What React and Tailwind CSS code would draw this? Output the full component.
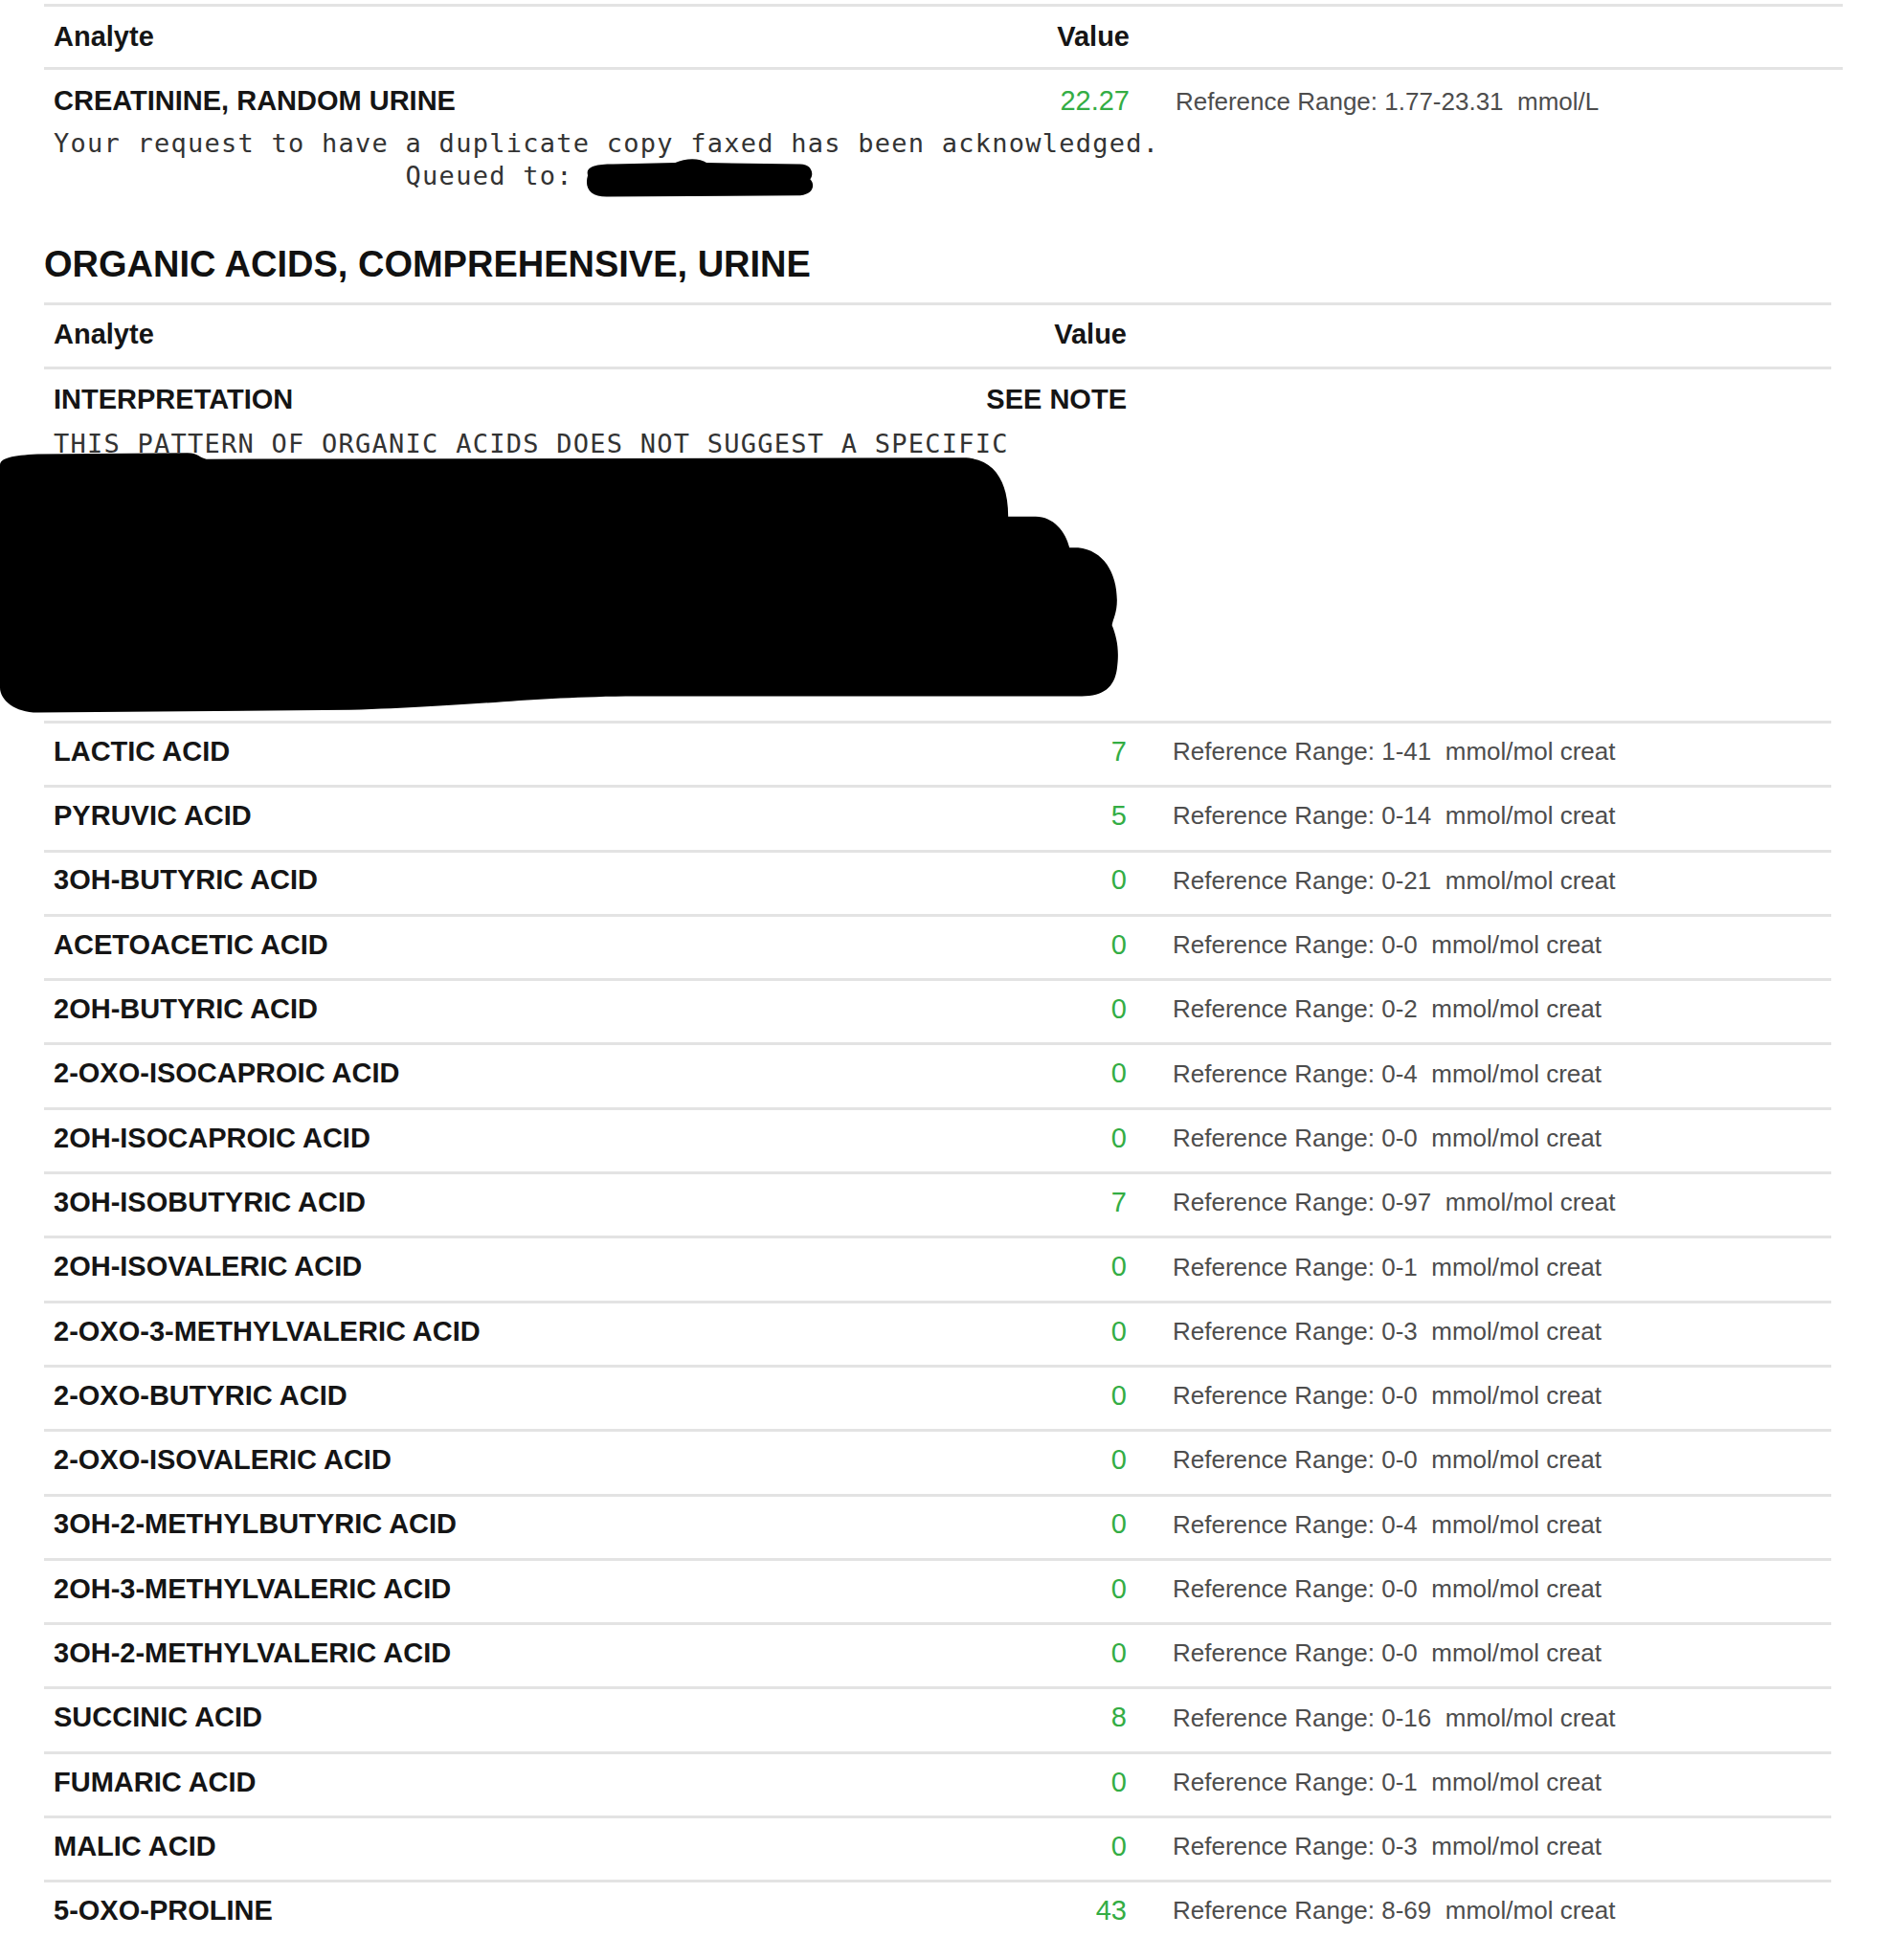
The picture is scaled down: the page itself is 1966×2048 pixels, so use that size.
import React from "react";

const rows = [
  ["LACTIC ACID", "7", "1-41"],
  ["PYRUVIC ACID", "5", "0-14"],
  ["3OH-BUTYRIC ACID", "0", "0-21"],
  ["ACETOACETIC ACID", "0", "0-0"],
  ["2OH-BUTYRIC ACID", "0", "0-2"],
  ["2-OXO-ISOCAPROIC ACID", "0", "0-4"],
  ["2OH-ISOCAPROIC ACID", "0", "0-0"],
  ["3OH-ISOBUTYRIC ACID", "7", "0-97"],
  ["2OH-ISOVALERIC ACID", "0", "0-1"],
  ["2-OXO-3-METHYLVALERIC ACID", "0", "0-3"],
  ["2-OXO-BUTYRIC ACID", "0", "0-0"],
  ["2-OXO-ISOVALERIC ACID", "0", "0-0"],
  ["3OH-2-METHYLBUTYRIC ACID", "0", "0-4"],
  ["2OH-3-METHYLVALERIC ACID", "0", "0-0"],
  ["3OH-2-METHYLVALERIC ACID", "0", "0-0"],
  ["SUCCINIC ACID", "8", "0-16"],
  ["FUMARIC ACID", "0", "0-1"],
  ["MALIC ACID", "0", "0-3"],
  ["5-OXO-PROLINE", "43", "8-69"],
];

const mono =
  "font-['DejaVu_Sans_Mono','Liberation_Mono',monospace] text-[27px] tracking-[1.25px] text-[#333] whitespace-pre leading-[34px]";

function BigBlob() {
  return (
    <svg
      className="absolute left-0 top-[463.7px]"
      width="1176"
      height="287"
      viewBox="0 355 900 220"
      preserveAspectRatio="none"
    >
      <path
        fill="#000"
        d="M 0 372 C 0 366, 10 364, 30 363 L 150 362 C 158 362, 160 366, 165 367 L 770 366 C 795 366, 806 385, 806 413 L 828 413 C 842 413, 852 425, 855 438 L 862 438 C 882 440, 893 458, 893 480 C 893 490, 890 495, 889 500 C 893 510, 895 520, 893 535 C 891 550, 882 557, 865 557 L 500 557 C 420 558, 380 565, 280 568 L 30 570 C 12 570, 0 560, 0 550 Z"
      />
    </svg>
  );
}

function SmallBlob() {
  return (
    <svg
      className="absolute left-[600.9px] top-[156.8px]"
      width="261"
      height="59"
      viewBox="460 120 200 45"
      preserveAspectRatio="none"
    >
      <path
        fill="#000"
        d="M 470 140 C 468 133, 476 131, 490 131 L 540 130 C 548 126, 560 126, 565 130 L 640 131 C 650 131, 651 140, 648 143 C 652 147, 651 155, 640 156 L 485 157 C 472 157, 467 150, 470 140 Z"
      />
    </svg>
  );
}

export default function App() {
  return (
    <div className="relative w-[1966px] min-h-[2048px] overflow-hidden bg-white font-['Liberation_Sans',Arial,sans-serif] text-[#151515]">
      <div className="pl-[46px] pt-[4px]">
        {/* Table 1 */}
        <div className="w-[1879px]">
          <div className="flex h-[66px] items-center border-t-[3px] border-[#e3e3e3]">
            <div className="w-[934px] pl-[10px] text-[29px] font-bold">Analyte</div>
            <div className="w-[200px] text-right text-[29px] font-bold">Value</div>
            <div className="flex-1" />
          </div>
          <div className="border-t-[3px] border-[#e3e3e3] pt-[16px]">
            <div className="flex h-[34px] items-center">
              <div className="w-[934px] pl-[10px] text-[29px] font-bold">CREATININE, RANDOM URINE</div>
              <div className="w-[200px] text-right text-[29px] text-[#33ad44]">22.27</div>
              <div className="flex-1 pl-[48px] text-[26px] text-[#4d4d4d] whitespace-pre">
                {"Reference Range: 1.77-23.31  mmol/L"}
              </div>
            </div>
            <div className={`mt-[10px] pl-[10px] ${mono}`}>
              {"Your request to have a duplicate copy faxed has been acknowledged.\n                     Queued to: "}
            </div>
          </div>
        </div>

        {/* Title */}
        <h2 className="mt-[52px] mb-[17px] h-[46px] text-[38px] font-bold leading-[46px] text-[#111]">
          ORGANIC ACIDS, COMPREHENSIVE, URINE
        </h2>

        {/* Table 2 */}
        <div className="w-[1867px]">
          <div className="flex h-[67px] items-center border-t-[3px] border-[#e3e3e3] pb-[2px]">
            <div className="w-[931px] pl-[10px] text-[29px] font-bold">Analyte</div>
            <div className="w-[200px] text-right text-[29px] font-bold">Value</div>
            <div className="flex-1" />
          </div>
          <div className="border-t-[3px] border-[#e3e3e3] pt-[15px]">
            <div className="flex h-[34px] items-center">
              <div className="w-[931px] pl-[10px] text-[29px] font-bold">INTERPRETATION</div>
              <div className="w-[200px] text-right text-[29px] font-bold">SEE NOTE</div>
              <div className="flex-1" />
            </div>
            <div className={`mt-[12px] pl-[10px] ${mono}`}>
              THIS PATTERN OF ORGANIC ACIDS DOES NOT SUGGEST A SPECIFIC
            </div>
            <div className="h-[272px]" />
          </div>
          {rows.map(([name, value, range]) => (
            <div
              key={name}
              className="flex h-[67.3px] items-center border-t-[3px] border-[#e3e3e3] pb-[5px]"
            >
              <div className="w-[931px] pl-[10px] text-[29px] font-bold">{name}</div>
              <div className="w-[200px] text-right text-[29px] text-[#33ad44]">{value}</div>
              <div className="flex-1 pl-[48px] text-[26px] text-[#4d4d4d] whitespace-pre">
                {`Reference Range: ${range}  mmol/mol creat`}
              </div>
            </div>
          ))}
        </div>
      </div>

      <SmallBlob />
      <BigBlob />
    </div>
  );
}
